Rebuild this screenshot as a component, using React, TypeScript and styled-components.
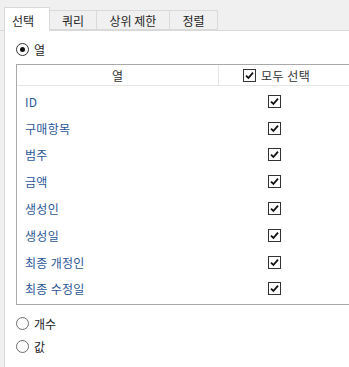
import styled, { createGlobalStyle } from 'styled-components'

const GlobalStyle = createGlobalStyle`
  html, body {
    margin: 0;
    padding: 0;
    background: #f0f0f0;
    font-family: "Noto Sans CJK KR", "Noto Sans", sans-serif;
    font-size: 12px;
    color: #1e1e1e;
    overflow: hidden;
  }
`;

const columns = ['ID', '구매항목', '범주', '금액', '생성인', '생성일', '최종 개정인', '최종 수정일'];
const tabs = ['선택', '쿼리', '상위 제한', '정렬'];

const CheckIcon: React.FC = () => (
  <svg width="9" height="9" viewBox="0 0 9 9">
    <path d="M1 4.6 L3.4 7 L8 1.6" fill="none" stroke="#111" strokeWidth="1.8" />
  </svg>
);

const App: React.FC = () => {
  return (
    <>
      <GlobalStyle />
      <Window>
        <TabStrip>
          {tabs.map((t, i) => (
            <Tab key={t} $active={i === 0}>{t}</Tab>
          ))}
        </TabStrip>
        <Panel>
          <RadioRow $top={9}>
            <Radio $checked />
            <RadioLabel>열</RadioLabel>
          </RadioRow>
          <Table>
            <HeaderRow>
              <HeaderName>열</HeaderName>
              <HeaderCheck>
                <CheckBox><CheckIcon /></CheckBox>
                <span>모두 선택</span>
              </HeaderCheck>
              <HeaderRest />
            </HeaderRow>
            <Body>
              {columns.map((c) => (
                <Row key={c}>
                  <NameCell>{c}</NameCell>
                  <CheckCell>
                    <CheckBox><CheckIcon /></CheckBox>
                  </CheckCell>
                </Row>
              ))}
            </Body>
          </Table>
          <RadioRow $top={9}>
            <Radio />
            <RadioLabel>개수</RadioLabel>
          </RadioRow>
          <RadioRow $top={5}>
            <Radio />
            <RadioLabel>값</RadioLabel>
          </RadioRow>
        </Panel>
      </Window>
    </>
  );
};

const Window = styled.div`
  width: 349px;
  height: 367px;
  display: flex;
  flex-direction: column;
  overflow: hidden;
`;

const TabStrip = styled.div`
  height: 30px;
  display: flex;
  align-items: flex-end;
  padding-left: 4px;
  border-bottom: 1px solid #d9d9d9;
  position: relative;
  z-index: 1;
`;

const Tab = styled.div<{ $active?: boolean }>`
  box-sizing: border-box;
  height: ${(p) => (p.$active ? '24px' : '20px')};
  margin-bottom: ${(p) => (p.$active ? '-1px' : '0')};
  padding: ${(p) => (p.$active ? '1px 9px 0 7px' : '0 9px')};
  display: flex;
  align-items: center;
  background: ${(p) => (p.$active ? '#ffffff' : '#f0f0f0')};
  border: 1px solid #d9d9d9;
  border-bottom: ${(p) => (p.$active ? 'none' : '1px solid #d9d9d9')};
  border-left: ${(p) => (p.$active ? '1px solid #d9d9d9' : 'none')};
  font-size: 12px;
  color: #1e1e1e;
  min-width: 46px;
  &:first-child {
    width: 46px;
  }
  &:nth-child(2) {
    width: 47px;
    justify-content: center;
  }
  &:nth-child(3) {
    width: 73px;
    justify-content: center;
  }
  &:nth-child(4) {
    width: 48px;
    justify-content: center;
  }
`;

const Panel = styled.div`
  flex: 1;
  margin-left: 4px;
  background: #ffffff;
  border-left: 1px solid #d9d9d9;
  display: flex;
  flex-direction: column;
`;

const RadioRow = styled.div<{ $top: number }>`
  display: flex;
  align-items: center;
  height: 18px;
  margin-top: ${(p) => p.$top}px;
  padding-left: 11px;
  gap: 5px;
`;

const Radio = styled.span<{ $checked?: boolean }>`
  box-sizing: border-box;
  width: 13px;
  height: 13px;
  border-radius: 50%;
  border: 1px solid #333;
  border-color: ${(p) => (p.$checked ? '#333333' : '#6d6d6d')};
  display: flex;
  align-items: center;
  justify-content: center;
  &::after {
    content: '';
    display: ${(p) => (p.$checked ? 'block' : 'none')};
    width: 5px;
    height: 5px;
    border-radius: 50%;
    background: #111;
  }
`;

const RadioLabel = styled.span`
  font-size: 12px;
  color: #1e1e1e;
`;

const Table = styled.div`
  margin-top: 6px;
  margin-left: 11px;
  width: 360px;
  flex-shrink: 0;
  border: 1px solid #a9a9a9;
  border-right: none;
  background: #fff;
`;

const HeaderRow = styled.div`
  display: flex;
  height: 20px;
  border-bottom: 1px solid #e5e5e5;
`;

const HeaderName = styled.div`
  width: 201px;
  border-right: 1px solid #e5e5e5;
  display: flex;
  align-items: center;
  justify-content: center;
  color: #333;
`;

const HeaderCheck = styled.div`
  width: 120px;
  border-right: 1px solid #e5e5e5;
  display: flex;
  align-items: center;
  padding-left: 24px;
  gap: 5px;
  color: #333;
  letter-spacing: 0.5px;
`;

const HeaderRest = styled.div`
  flex: 1;
`;

const Body = styled.div`
  padding: 2px 0 2px;
`;

const Row = styled.div`
  display: flex;
  height: 26.8px;
  align-items: center;
`;

const NameCell = styled.div`
  width: 202px;
  padding-left: 8px;
  box-sizing: border-box;
  color: #2b5797;
  letter-spacing: 0.3px;
`;

const CheckCell = styled.div`
  width: 120px;
  display: flex;
  padding-left: 67px;
`;

const CheckBox = styled.span`
  box-sizing: border-box;
  width: 13px;
  height: 13px;
  border: 1px solid #333;
  background: #fff;
  display: flex;
  align-items: center;
  justify-content: center;
`;

export default App;
